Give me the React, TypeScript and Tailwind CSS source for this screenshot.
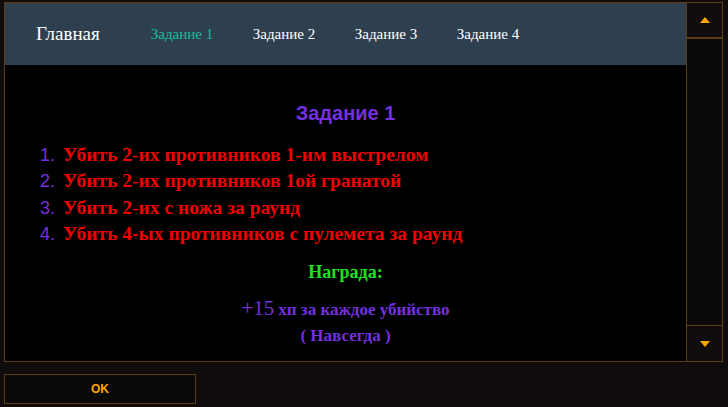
import React from "react";

const TABS = ["Задание 1", "Задание 2", "Задание 3", "Задание 4"];

const serif = "font-['Liberation_Serif','Times_New_Roman',serif]";
const sans = "font-['Liberation_Sans',Arial,sans-serif]";

function Dash() {
  return <span className="font-normal">-</span>;
}

const TASKS: React.ReactNode[] = [
  <>Убить 2<Dash />их противников 1<Dash />им выстрелом</>,
  <>Убить 2<Dash />их противников 1ой гранатой</>,
  <>Убить 2<Dash />их с ножа за раунд</>,
  <>Убить 4-ых противников с пулемета за раунд</>,
];

export default function App() {
  return (
    <div className="h-[407px] w-[728px] overflow-hidden bg-[#100c0c]">
      <div className="ml-[4px] mt-[2px] flex h-[360px] w-[719px] border border-[#5e3d12]">
        <div className="flex flex-1 flex-col bg-black">
          <div className={`flex h-[62px] items-center bg-[#2e3f50] pl-[31px] text-white ${serif}`}>
            <span className="text-[19px]">Главная</span>
            <div className="ml-[51px] flex text-[15px]">
              {TABS.map((t, i) => (
                <span key={t} className={`w-[102px] ${i === 0 ? "text-[#1abc9c]" : "text-white"}`}>
                  {t}
                </span>
              ))}
            </div>
          </div>

          <div className="flex flex-1 flex-col">
            <h1 className={`mt-[36px] text-center text-[20px] font-bold leading-[24px] text-[#7430de] ${sans}`}>
              Задание 1
            </h1>
            <ol className="ml-[35px] mt-[17px]">
              {TASKS.map((t, i) => (
                <li key={i} className="flex h-[26.4px] items-baseline leading-[26px]">
                  <span className={`w-[23px] text-[18px] text-[#7430de] ${sans}`}>{i + 1}.</span>
                  <span className={`text-[19.5px] font-bold text-[#f00000] ${serif}`}>{t}</span>
                </li>
              ))}
            </ol>
            <div className={`mt-[12px] text-center ${serif}`}>
              <p className="text-[18px] font-bold leading-[24px] text-[#1de21d]">Награда:</p>
              <p className="mt-[12px] leading-[24px] text-[#7430de]">
                <span className="text-[21px]">+15</span>{" "}
                <span className="text-[17px] font-bold">хп за каждое убийство</span>
              </p>
              <p className="mt-[2px] text-[17px] font-bold leading-[24px] text-[#7430de]">( Навсегда )</p>
            </div>
          </div>
        </div>

        <div className="flex w-[36px] flex-col border-l border-[#5e3d12] bg-[#0c0909]">
          <button className="flex h-[36px] items-center justify-center border-b-[2px] border-[#5e3d12] bg-[#120d0d]">
            <svg width="10" height="6" viewBox="0 0 10 6">
              <path d="M0 6 L5 0 L10 6 Z" fill="#ffa800" />
            </svg>
          </button>
          <div className="flex-1" />
          <button className="flex h-[36px] items-center justify-center border-t border-[#5e3d12] bg-[#120d0d]">
            <svg width="10" height="6" viewBox="0 0 10 6">
              <path d="M0 0 L5 6 L10 0 Z" fill="#ffa800" />
            </svg>
          </button>
        </div>
      </div>

      <button
        className={`ml-[4px] mt-[12px] flex h-[30px] w-[192px] items-center justify-center border border-[#5e3d12] bg-[#0c0909] text-[12px] font-bold text-[#ffa800] ${sans}`}
      >
        OK
      </button>
    </div>
  );
}
